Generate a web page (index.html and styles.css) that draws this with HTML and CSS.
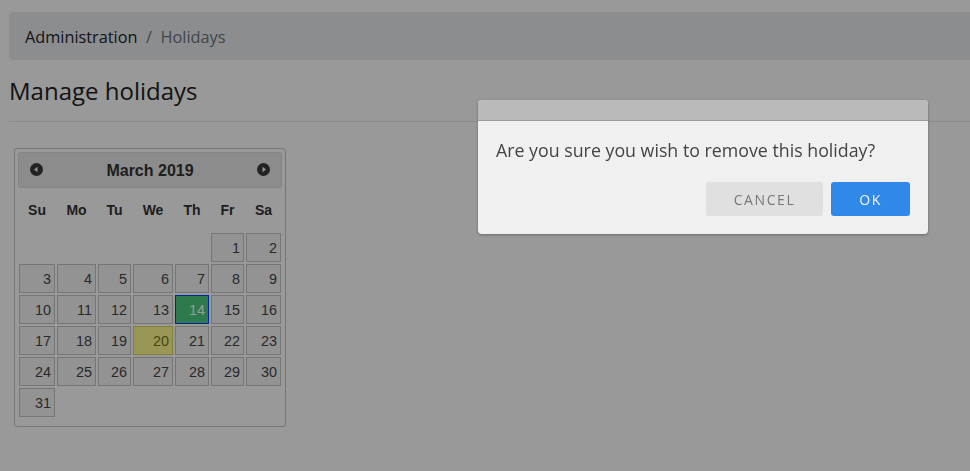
FILE: index.html
```html
<!DOCTYPE html>
<html>
<head>
<meta charset="utf-8">
<link rel="stylesheet" href="styles.css">
</head>
<body>
<div class="page">
  <nav class="breadcrumb">
    <span class="crumb">Administration</span>
    <span class="sep">/</span>
    <span class="crumb active">Holidays</span>
  </nav>
  <h2 class="title">Manage holidays</h2>
  <hr class="rule">
  <div class="datepicker">
    <div class="dp-header">
      <svg class="dp-nav" width="13" height="13" viewBox="0 0 13 13"><circle cx="6.5" cy="6.5" r="6.5" fill="#3a3a3a"/><path d="M4 6.5 L7.5 3.8 L7.5 9.2 Z" fill="#f6f6f6"/></svg>
      <span class="dp-title">March 2019</span>
      <svg class="dp-nav" width="13" height="13" viewBox="0 0 13 13"><circle cx="6.5" cy="6.5" r="6.5" fill="#3a3a3a"/><path d="M9 6.5 L5.5 3.8 L5.5 9.2 Z" fill="#f6f6f6"/></svg>
    </div>
    <div class="dp-grid dp-dow">
      <span>Su</span><span>Mo</span><span>Tu</span><span>We</span><span>Th</span><span>Fr</span><span>Sa</span>
    </div>
    <div class="dp-grid dp-days">
      <span class="blank"></span><span class="blank"></span><span class="blank"></span><span class="blank"></span><span class="blank"></span>
      <a class="day">1</a><a class="day">2</a>
      <a class="day">3</a><a class="day">4</a><a class="day">5</a><a class="day">6</a><a class="day">7</a><a class="day">8</a><a class="day">9</a>
      <a class="day">10</a><a class="day">11</a><a class="day">12</a><a class="day">13</a><a class="day holiday">14</a><a class="day">15</a><a class="day">16</a>
      <a class="day">17</a><a class="day">18</a><a class="day">19</a><a class="day today">20</a><a class="day">21</a><a class="day">22</a><a class="day">23</a>
      <a class="day">24</a><a class="day">25</a><a class="day">26</a><a class="day">27</a><a class="day">28</a><a class="day">29</a><a class="day">30</a>
      <a class="day">31</a>
    </div>
  </div>
</div>
<div class="overlay"></div>
<div class="dialog">
  <div class="dialog-head"></div>
  <div class="dialog-body">
    <p class="dialog-text">Are you sure you wish to remove this holiday?</p>
    <div class="dialog-actions">
      <button class="btn btn-cancel">CANCEL</button>
      <button class="btn btn-ok">OK</button>
    </div>
  </div>
</div>
</body>
</html>
```

FILE: styles.css
```css
html, body {
  margin: 0;
  padding: 0;
  background: #fff;
  overflow: hidden;
  width: 970px;
  height: 471px;
}
body {
  font-family: "Open Sans", "Noto Sans", sans-serif;
  color: #212529;
}
.page {
  width: 1000px;
  padding: 12px 0 0 9px;
}
.breadcrumb {
  display: flex;
  align-items: center;
  height: 48px;
  box-sizing: border-box;
  padding: 1px 16px 0 16px;
  background: #e9ecef;
  border-radius: 4px;
  font-size: 16.3px;
  line-height: 24px;
}
.sep {
  color: #6c757d;
  padding: 0 8.5px;
}
.crumb.active {
  color: #6c757d;
}
.title {
  margin: 16px 0 16px 0;
  font-size: 24px;
  font-weight: 400;
  line-height: 29px;
  color: #222;
}
.rule {
  margin: 0;
  border: 0;
  border-top: 1px solid rgba(0,0,0,0.1);
  height: 0;
}
.datepicker {
  margin: 26px 0 0 5px;
  width: 272px;
  box-sizing: border-box;
  border: 1px solid #c5c5c5;
  border-radius: 3px;
  padding: 3px 3px 9px 3px;
  font-family: "Liberation Sans", Arial, sans-serif;
}
.dp-header {
  height: 36px;
  box-sizing: border-box;
  border: 1px solid #dddddd;
  background: #e9e9e9;
  border-radius: 3px;
  display: flex;
  align-items: center;
  justify-content: space-between;
  padding: 0 11px 0 11px;
}
.dp-nav {
  display: block;
  margin-top: -1px;
}
.dp-title {
  font-weight: bold;
  font-size: 16px;
  color: #333;
  margin-top: 1px;
}
.dp-grid {
  display: grid;
  grid-template-columns: 36px 39px 33px 40px 34px 33px 35px;
  column-gap: 2px;
  padding: 0 1px;
}
.dp-dow {
  margin-top: 5px;
  height: 34px;
  align-items: center;
}
.dp-dow span {
  text-align: center;
  font-weight: bold;
  font-size: 14px;
  color: #333;
}
.dp-days {
  margin-top: 6px;
  grid-auto-rows: 29px;
  row-gap: 2px;
}
.day {
  display: flex;
  align-items: center;
  justify-content: flex-end;
  box-sizing: border-box;
  border: 1px solid #c5c5c5;
  background: #f6f6f6;
  color: #454545;
  font-size: 14.4px;
  padding: 0 3px 0 0;
}
.day.holiday {
  background: #4ccb7f;
  border-color: #003eff;
  color: #fff;
}
.day.today {
  background: #fffa90;
  border-color: #dad55e;
  color: #777620;
}
.overlay {
  position: fixed;
  inset: 0;
  background: rgba(0,0,0,0.4);
}
.dialog {
  position: absolute;
  left: 478px;
  top: 100px;
  width: 450px;
  height: 134px;
  box-sizing: border-box;
  background: #f0f0f0;
  border-radius: 4px;
  overflow: hidden;
  box-shadow: 0 1px 3px rgba(0,0,0,0.3);
  display: flex;
  flex-direction: column;
}
.dialog-head {
  height: 20px;
  background: #bababa;
  border-bottom: 1px solid #9c9c9c;
}
.dialog-body {
  padding: 0 18px;
}
.dialog-text {
  margin: 17px 0 0 0;
  font-size: 17.8px;
  line-height: 25px;
  color: #444;
}
.dialog-actions {
  display: flex;
  justify-content: flex-end;
  gap: 8px;
  margin-top: 19px;
}
.btn {
  height: 34px;
  border: 0;
  border-radius: 3px;
  font-family: "Open Sans", "Noto Sans", sans-serif;
  font-size: 14px;
  letter-spacing: 1.6px;
  padding: 0;
}
.btn-cancel {
  width: 117px;
  background: #e0e0e0;
  color: #777;
}
.btn-ok {
  width: 79px;
  background: #3089e8;
  color: #f4f4f4;
}
```
